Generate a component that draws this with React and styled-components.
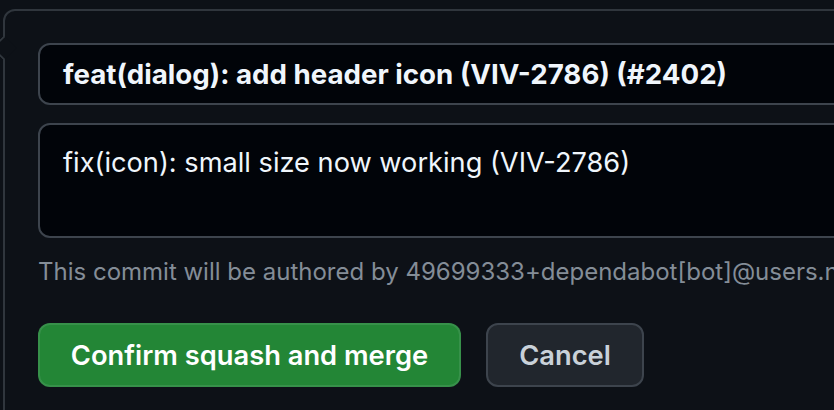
import React from "react"
import styled, { createGlobalStyle } from "styled-components"

const GlobalStyle = createGlobalStyle`
  html, body {
    margin: 0;
    padding: 0;
    background: #0d1117;
    overflow: hidden;
  }
  body {
    font-family: Inter, "Noto Sans", sans-serif;
    -webkit-font-smoothing: antialiased;
  }
`

const Page = styled.div`
  width: 834px;
  height: 410px;
  padding: 9px 0 0 3px;
  box-sizing: border-box;
  overflow: hidden;
`

const Panel = styled.div`
  position: relative;
  width: 1000px;
  height: 460px;
  box-sizing: border-box;
  border: 2px solid #30363d;
  border-radius: 12px;
  padding: 32px 0 0 33px;
  display: flex;
  flex-direction: column;
`

const Caret = styled.span`
  position: absolute;
  left: -10px;
  top: 28px;
  width: 16px;
  height: 16px;
  background: #0d1117;
  border-left: 2px solid #30363d;
  border-bottom: 2px solid #30363d;
  border-bottom-left-radius: 3px;
  transform: rotate(45deg);
`

const Field = styled.div`
  box-sizing: border-box;
  background: #010409;
  border: 2px solid #3d444d;
  border-radius: 12px;
  color: #f0f6fc;
  padding: 0 0 0 23px;
  font-size: ${(p) => (p.$bold ? "27.7px" : "27.2px")};
  font-weight: ${(p) => (p.$bold ? 700 : 400)};
  height: ${(p) => p.$height}px;
  display: flex;
  align-items: ${(p) => (p.$multi ? "flex-start" : "center")};
  padding-top: ${(p) => (p.$multi ? "18px" : "0")};
  line-height: 40px;
  white-space: nowrap;
  margin-bottom: 18px;
`

const Note = styled.p`
  margin: 0;
  color: #848d97;
  font-size: 24px;
  line-height: 36px;
  white-space: nowrap;
  margin-top: -2px;
`

const Actions = styled.div`
  display: flex;
  gap: 25px;
  margin-top: 33px;
`

const Button = styled.button`
  box-sizing: border-box;
  height: 64px;
  width: ${(p) => p.$width}px;
  border-radius: 12px;
  font-family: inherit;
  font-size: 27.3px;
  font-weight: 600;
  padding: 0;
  cursor: pointer;
  background: ${(p) => (p.$primary ? "#238636" : "#21262d")};
  color: ${(p) => (p.$primary ? "#ffffff" : "#c9d1d9")};
  border: 2px solid ${(p) => (p.$primary ? "rgba(240, 246, 252, 0.1)" : "#3d444d")};
`

const App = () => {
  return (
    <Page>
      <GlobalStyle />
      <Panel>
        <Caret />
        <Field $bold $height={62}>
          feat(dialog): add header icon (VIV-2786) (#2402)
        </Field>
        <Field $multi $height={115}>
          fix(icon): small size now working (VIV-2786)
        </Field>
        <Note>This commit will be authored by 49699333+dependabot[bot]@users.noreply.github.com</Note>
        <Actions>
          <Button $primary $width={423}>Confirm squash and merge</Button>
          <Button $width={158}>Cancel</Button>
        </Actions>
      </Panel>
    </Page>
  )
}

export default App
